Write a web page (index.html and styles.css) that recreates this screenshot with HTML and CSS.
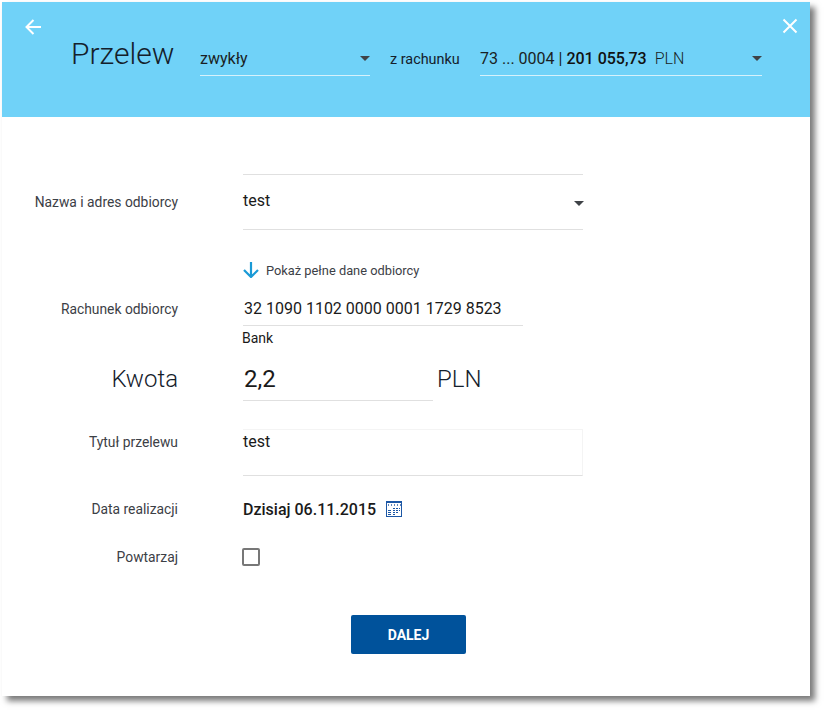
FILE: index.html
```html
<!DOCTYPE html>
<html lang="pl">
<head>
<meta charset="utf-8">
<title>Przelew</title>
<link rel="stylesheet" href="styles.css">
</head>
<body>
<main class="panel">
  <header class="head">
    <svg class="head-icon back" viewBox="0 0 18 18"><path d="M17 9H2.500M9.500 2 2.500 9l7 7" fill="none" stroke="#fff" stroke-width="2"/></svg>
    <svg class="head-icon close" viewBox="0 0 16 16"><path d="M1.500 1.500l13 13M14.500 1.500l-13 13" fill="none" stroke="#fff" stroke-width="2"/></svg>
    <h1 class="title">Przelew</h1>
    <div class="select type"><span>zwykły</span><i class="caret"></i></div>
    <span class="from">z rachunku</span>
    <div class="select account"><span>73 ... 0004 | <b>201 055,73</b>&nbsp; <span class="cur">PLN</span></span><i class="caret"></i></div>
  </header>
  <form class="form">
    <div class="row r-name">
      <label class="lab">Nazwa i adres odbiorcy</label>
      <div class="recipient"><span>test</span><i class="caret"></i></div>
    </div>
    <div class="row r-more">
      <span></span>
      <div class="more">
        <svg class="more-icon" viewBox="0 0 16 16"><path d="M8 0v15M1 8l7 7 7-7" fill="none" stroke="#1a9ad6" stroke-width="2.200"/></svg>
        <span class="more-text">Pokaż pełne dane odbiorcy</span>
      </div>
    </div>
    <div class="row r-acc">
      <label class="lab">Rachunek odbiorcy</label>
      <div class="acc">32 1090 1102 0000 0001 1729 8523</div>
    </div>
    <div class="row r-bank">
      <span></span>
      <div class="bank">Bank</div>
    </div>
    <div class="row r-amount">
      <label class="lab big">Kwota</label>
      <div class="amount-wrap">
        <div class="amount">2,2</div>
        <span class="pln">PLN</span>
      </div>
    </div>
    <div class="row r-title">
      <label class="lab">Tytuł przelewu</label>
      <div class="titlebox">test</div>
    </div>
    <div class="row r-date">
      <label class="lab">Data realizacji</label>
      <div class="date">
        <b>Dzisiaj 06.11.2015</b>
        <svg class="cal" viewBox="0 0 16 16" shape-rendering="crispEdges">
          <rect x=".5" y=".5" width="15" height="15" fill="#fff" stroke="#1c57a5"/>
          <rect x="1" y="1" width="14" height="1" fill="#1c57a5"/>
          <path d="M2 3h1v2H2zM5 3h1v2H5zM8 3h1v2H8zM11 3h1v2h-1zM14 3h1v2h-1z" fill="#5f86bd"/>
          <path d="M7 7h2v1H7zM10 7h2v1h-2zM13 7h1v1h-1zM2 9h3v1H2zM7 9h2v1H7zM10 9h2v1h-2zM13 9h1v1h-1zM2 11h3v1H2zM7 11h2v1H7zM10 11h2v1h-2zM2 13h3v1H2zM7 13h2v1H7z" fill="#1c57a5"/>
        </svg>
      </div>
    </div>
    <div class="row r-rep">
      <label class="lab">Powtarzaj</label>
      <div class="check-wrap"><span class="check"></span></div>
    </div>
    <div class="actions"><button type="button" class="next">DALEJ</button></div>
  </form>
</main>
</body>
</html>
```
FILE: styles.css
```css
* { box-sizing: border-box; }
html, body { margin: 0; padding: 0; background: #fff; }
body { font-family: Roboto, "Liberation Sans", sans-serif; color: #1a1a1a; height: 710px; overflow: hidden; }
.panel {
  position: relative;
  width: 808px;
  height: 694px;
  margin: 2px 0 0 2px;
  background: #fff;
  box-shadow: 5px 5px 6px rgba(0, 0, 0, .52);
}
.head {
  position: relative;
  height: 115px;
  background: #70d2f8;
  display: flex;
  align-items: flex-start;
  padding: 33px 0 0 69px;
}
.head-icon { position: absolute; display: block; }
.back { left: 22px; top: 16px; width: 18px; height: 18px; }
.close { left: 780px; top: 16px; width: 16px; height: 16px; }
.title { margin: 0; font-size: 30px; font-weight: 300; line-height: 38px; width: 129px; color: #14202b; }
.select {
  display: flex;
  justify-content: space-between;
  align-items: center;
  height: 41px;
  padding: 6px 0 0 0;
  border-bottom: 1px solid #d6f1fb;
  font-size: 16px;
  color: #1a1f24;
}
.type { width: 170px; }
.account { width: 282px; }
.from { font-size: 14.400px; width: 90px; margin-left: 20px; line-height: 18px; padding-top: 16px; color: #14202b; }
.select b { font-weight: 500; color: #111; }
.cur { font-weight: 300; }
.caret {
  width: 0;
  height: 0;
  border-left: 5.500px solid transparent;
  border-right: 5.500px solid transparent;
  border-top: 5.500px solid #3f4347;
  margin-top: 1px;
}
.form { padding-top: 57px; }
.row { display: grid; grid-template-columns: 176px 1fr; column-gap: 65px; align-items: center; }
.lab { font-size: 13.850px; text-align: right; color: #3c4046; line-height: 18px; }
.lab.big { font-size: 24px; font-weight: 300; line-height: 30px; color: #14202b; }
.recipient {
  width: 340px;
  height: 56px;
  border-top: 1px solid #e0e0e0;
  border-bottom: 1px solid #e0e0e0;
  font-size: 16px;
  display: flex;
  justify-content: space-between;
  align-items: center;
  padding-bottom: 3px;
}
.recipient .caret { margin-top: 5px; margin-right: -1px; }
.r-more { margin-top: 31px; }
.more { display: flex; align-items: center; gap: 7px; font-size: 12.840px; color: #3c4046; height: 17px; }
.more-text { padding-top: 2px; }
.more-icon { width: 16px; height: 16px; display: block; }
.r-acc { margin-top: 11px; }
.r-acc .lab { padding-top: 3px; }
.acc { width: 280px; height: 37px; border-bottom: 1px solid #e0e0e0; font-size: 16px; line-height: 20px; padding: 10px 0 0 1px; }
.r-bank { margin-top: 3px; }
.bank { font-size: 14px; line-height: 18px; margin-left: -1px; }
.r-amount { margin-top: 9px; }
.amount-wrap { display: flex; gap: 5px; align-items: flex-start; }
.amount { width: 190px; height: 45px; border-bottom: 1px solid #e0e0e0; font-size: 24px; line-height: 30px; padding: 8px 0 0 1px; }
.pln { font-size: 24px; font-weight: 300; line-height: 30px; padding-top: 8px; margin-left: -1px; color: #14202b; }
.r-title { margin-top: 28px; align-items: start; }
.r-title .lab { padding-top: 4px; }
.titlebox {
  width: 340px;
  height: 47px;
  border: 1px solid #f4f4f4;
  border-bottom-color: #e0e0e0;
  border-left: 0;
  font-size: 16px;
  line-height: 20px;
  padding-top: 2px;
}
.r-date { margin-top: 23px; }
.date { display: flex; align-items: center; gap: 10px; height: 20px; font-size: 16px; }
.date b { font-weight: 500; }
.cal { width: 16px; height: 16px; display: block; }
.r-rep { margin-top: 28px; }
.check-wrap { height: 20px; display: flex; align-items: center; }
.check { width: 18px; height: 18px; margin-left: -1px; border: 2px solid #777; border-radius: 2px; background: #fff; display: block; }
.actions { margin: 48px 0 0 349px; }
.next {
  display: block;
  width: 115px;
  height: 39px;
  border: 0;
  border-radius: 2px;
  background: #00529b;
  color: #fff;
  font-family: inherit;
  font-size: 14px;
  font-weight: 700;
  padding: 1px 0 0;
}
```
